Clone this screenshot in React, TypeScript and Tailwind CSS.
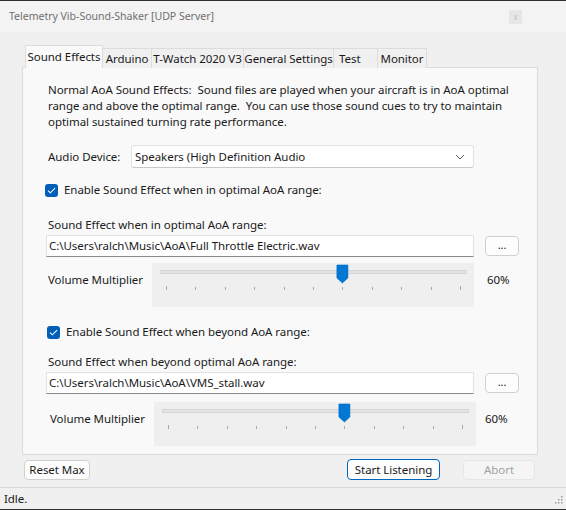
import React from "react";

const font = { fontFamily: '"Noto Sans", "Segoe UI", sans-serif' };

const CheckBox: React.FC<{ label: string; className?: string }> = ({ label, className }) => {
  return (
    <div className={`flex items-center h-[16px] ${className ?? ""}`}>
      <div className="w-[13px] h-[13px] rounded-[3px] bg-[#005fb8] flex items-center justify-center">
        <svg width="9" height="7" viewBox="0 0 9 7">
          <path d="M1 3.6 L3.4 5.8 L8 1.2" fill="none" stroke="#ffffff" strokeWidth="1.1" />
        </svg>
      </div>
      <span className="ml-[6px]">{label}</span>
    </div>
  );
};

const Slider: React.FC<{ value: number }> = ({ value }) => {
  const ticks = Array.from({ length: 11 }, (_, i) => 14 + i * 29.4);
  const thumbX = 14 + (value / 100) * 294;
  return (
    <div className="w-[322px] h-[44px] bg-[#efefef]">
      <svg width="322" height="44" viewBox="0 0 322 44">
        <rect x="8.5" y="7.5" width="306" height="3" fill="#e3e3e3" stroke="#d6d6d6" />
        {ticks.map((x, i) => (
          <line key={i} x1={Math.round(x) + 0.5} y1={i === 0 || i === 10 ? 23 : 24} x2={Math.round(x) + 0.5} y2="27" stroke="#a8a8a8" />
        ))}
        <path
          d={`M${thumbX - 5.5} 2 H${thumbX + 5.5} V15 L${thumbX} 20 L${thumbX - 5.5} 15 Z`}
          fill="#0078d4"
          stroke="#0067c0"
          strokeWidth="0.6"
        />
      </svg>
    </div>
  );
};

const FileInput: React.FC<{ value: string }> = ({ value }) => (
  <div className="flex items-center">
    <div className="w-[428px] h-[22px] bg-white border border-[#e2e2e2] border-b-[#8a8a8a] flex items-center px-[2px] -ml-[2px]">
      {value}
    </div>
    <button className="ml-[11px] w-[34px] h-[20px] bg-[#fdfdfd] border border-[#d0d0d0] rounded-[4px] text-[11px] leading-none pb-[4px]">
      ...
    </button>
  </div>
);

export default function App() {
  const tabs = ["Arduino", "T-Watch 2020 V3", "General Settings", "Test", "Monitor"];
  const tabWidths = ["w-[49px]", "w-[92px]", "w-[90px]", "w-[44px]", "w-[49px]"];

  return (
    <div
      className="w-[566px] h-[510px] bg-[#f0f0f0] text-[11.5px] tracking-[-0.05px] text-[#1a1a1a] flex flex-col border-t border-b border-[#2e2e2e] overflow-hidden whitespace-nowrap"
      style={font}
    >
      {/* title bar */}
      <div className="h-[31px] bg-[#f3f3f3] flex items-center justify-between pl-[9px] pr-[44px] shrink-0">
        <span className="text-[#707070] text-[10.6px]">Telemetry Vib-Sound-Shaker [UDP Server]</span>
        <div className="w-[13px] h-[14px] bg-[#e6e6e6] flex items-center justify-center text-[8px] text-[#c4c4c4] leading-none">
          x
        </div>
      </div>

      <div className="px-[22px] pt-[13px]">
        {/* tabs */}
        <div className="flex items-end ml-[3px] h-[23px] relative z-10">
          <div className="w-[78px] h-[23px] bg-[#f9f9f9] border border-[#dcdcdc] border-b-0 flex items-center justify-center pb-[1px]">
            Sound Effects
          </div>
          {tabs.map((t, i) => (
            <div
              key={t}
              className={`${tabWidths[i]} h-[20px] bg-[#f0f0f0] border border-[#dcdcdc] border-b-0 border-l-0 flex items-center ${t === "Test" ? "justify-start pl-[5px]" : "justify-center"}`}
            >
              {t}
            </div>
          ))}
        </div>

        {/* panel */}
        <div className="w-[516px] h-[388px] -mt-[1px] bg-[#f9f9f9] border border-[#dcdcdc] pl-[25px] pt-[14px]">
          <p className="leading-[16px]">
            Normal AoA Sound Effects:&nbsp; Sound files are played when your aircraft is in AoA optimal
            <br />
            range and above the optimal range.&nbsp; You can use those sound cues to try to maintain
            <br />
            optimal sustained turning rate performance.
          </p>

          <div className="flex items-center mt-[15px]">
            <span className="w-[83px]">Audio Device:</span>
            <div className="w-[343px] h-[23px] bg-white border border-[#e2e2e2] border-b-[#c8c8c8] rounded-[3px] flex items-center justify-between pl-[3px] pr-[8px]">
              <span>Speakers (High Definition Audio</span>
              <svg width="10" height="6" viewBox="0 0 10 6">
                <path d="M1 1 L5 5 L9 1" fill="none" stroke="#606060" strokeWidth="1" />
              </svg>
            </div>
          </div>

          <CheckBox className="mt-[14px] -ml-[3px]" label="Enable Sound Effect when in optimal AoA range:" />

          <div className="mt-[19px] leading-[16px]">Sound Effect when in optimal AoA range:</div>
          <div className="mt-[2px]">
            <FileInput value={"C:\\Users\\ralch\\Music\\AoA\\Full Throttle Electric.wav"} />
          </div>

          <div className="flex items-center mt-[6px]">
            <span className="w-[104px] -mt-[10px]">Volume Multiplier</span>
            <Slider value={60} />
            <span className="ml-[13px] -mt-[10px]">60%</span>
          </div>

          <CheckBox className="mt-[17px] -ml-[1px]" label="Enable Sound Effect when beyond AoA range:" />

          <div className="mt-[14px] leading-[16px]">Sound Effect when beyond optimal AoA range:</div>
          <div className="mt-[2px]">
            <FileInput value={"C:\\Users\\ralch\\Music\\AoA\\VMS_stall.wav"} />
          </div>

          <div className="flex items-center mt-[8px] ml-[2px]">
            <span className="w-[104px] -mt-[10px]">Volume Multiplier</span>
            <Slider value={60} />
            <span className="ml-[9px] -mt-[10px]">60%</span>
          </div>
        </div>

        {/* buttons */}
        <div className="flex items-center mt-[4px] ml-[2px]">
          <button className="w-[66px] h-[20px] bg-[#fdfdfd] border border-[#d0d0d0] rounded-[4px] leading-none">
            Reset Max
          </button>
          <button className="ml-[257px] w-[93px] h-[21px] bg-[#fdfdfd] border border-[#0067c0] rounded-[4px] leading-none">
            Start Listening
          </button>
          <button className="ml-[23px] w-[72px] h-[20px] bg-[#f5f5f5] border border-[#e6e6e6] rounded-[4px] text-[#a2a2a2] leading-none">
            Abort
          </button>
        </div>
      </div>

      {/* status bar */}
      <div className="mt-auto h-[22px] border-t border-[#dadada] flex items-center justify-between pl-[4px] pr-[3px]">
        <span>Idle.</span>
        <svg width="10" height="10" viewBox="0 0 10 10">
          {[
            [8, 2],
            [8, 5],
            [5, 5],
            [8, 8],
            [5, 8],
            [2, 8],
          ].map(([x, y], i) => (
            <rect key={i} x={x} y={y} width="1.5" height="1.5" fill="#9a9a9a" />
          ))}
        </svg>
      </div>
    </div>
  );
}
